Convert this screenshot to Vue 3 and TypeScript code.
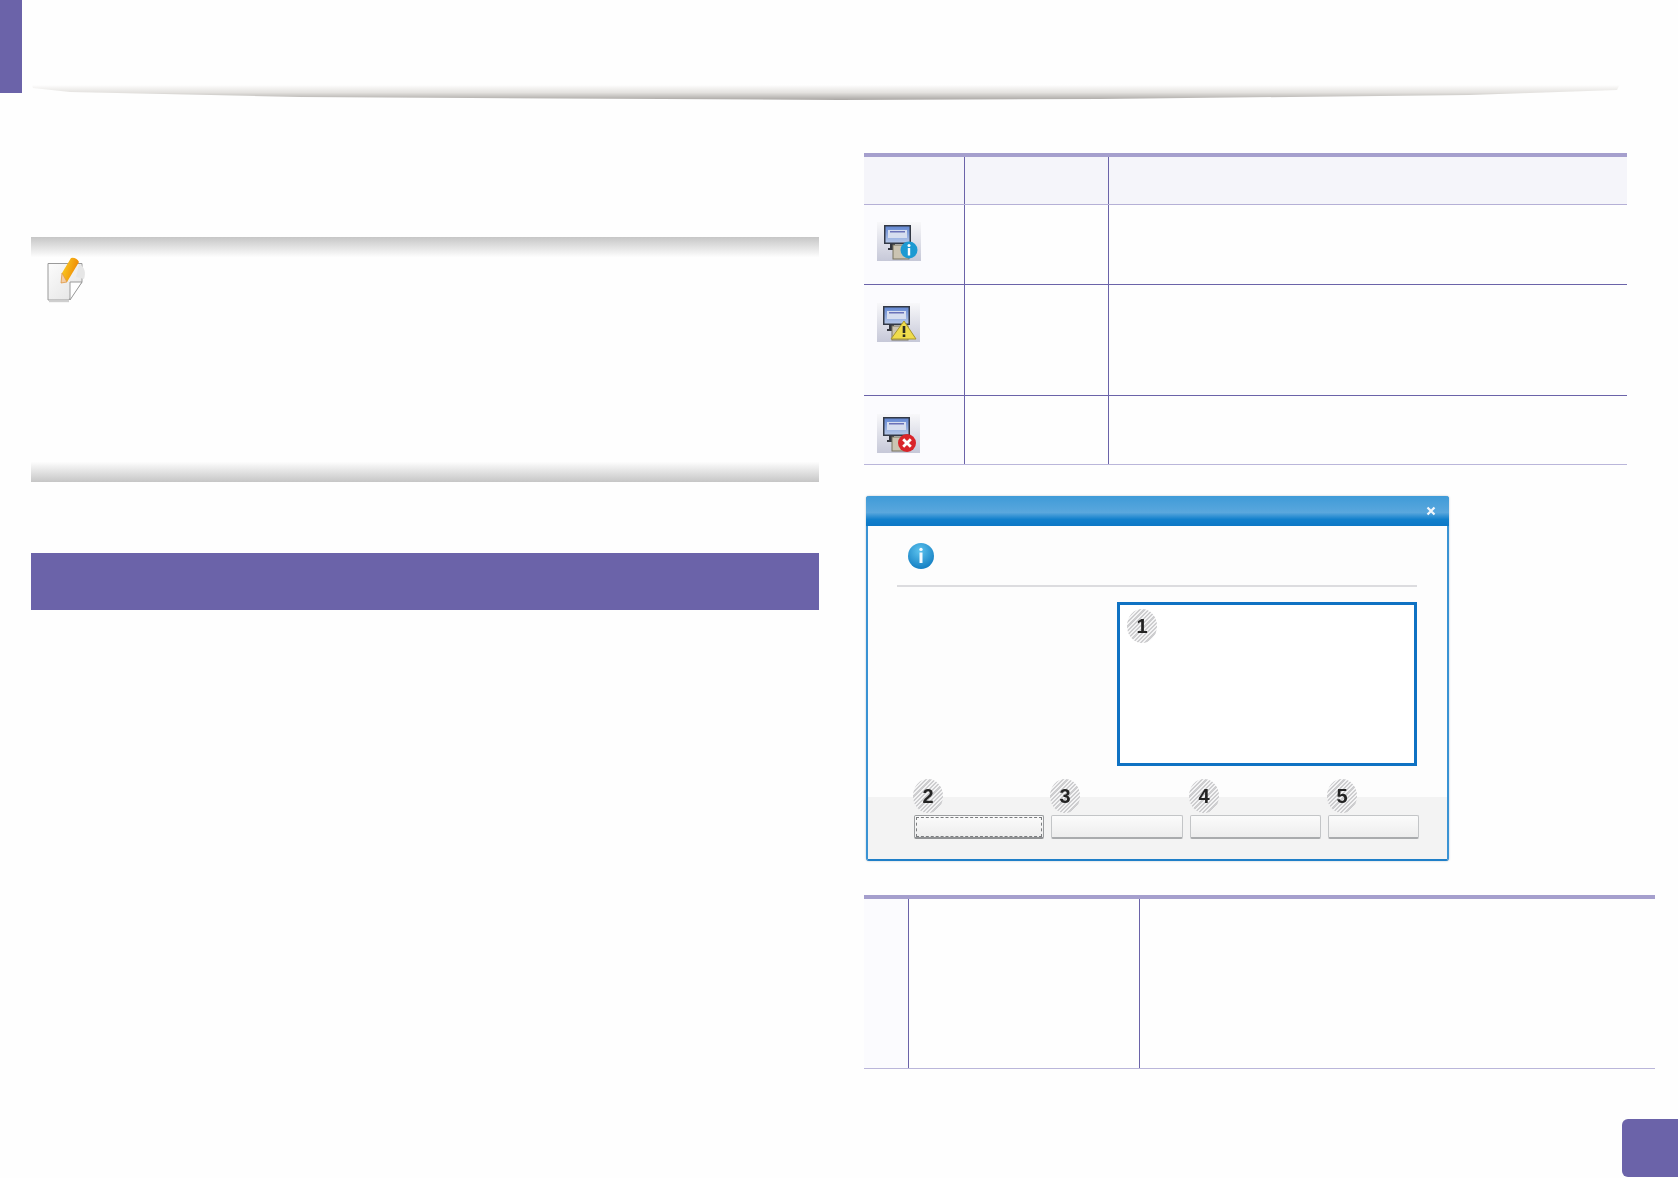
<script setup lang="ts">
// status rows in the first table, heights come from the reference
const statusRows = [
  { kind: 'info', height: 79, shift: 0 },
  { kind: 'warn', height: 110, shift: -1 },
  { kind: 'error', height: 68, shift: -1 },
]

const dialogButtons = [
  { label: '2', width: 130, focused: true },
  { label: '3', width: 132, focused: false },
  { label: '4', width: 131, focused: false },
  { label: '5', width: 91, focused: false },
]
</script>

<template>
  <div class="page">
    <header class="top">
      <div class="top-mark"></div>
      <svg class="top-shade" viewBox="0 0 1678 20" preserveAspectRatio="none">
        <defs>
          <linearGradient id="shade" gradientUnits="userSpaceOnUse" x1="0" y1="2" x2="0" y2="17">
            <stop offset="0" stop-color="#fefefe" />
            <stop offset="0.5" stop-color="#e4e2df" />
            <stop offset="1" stop-color="#a9a6a3" />
          </linearGradient>
          <filter id="soft"><feGaussianBlur stdDeviation="0.5" /></filter>
        </defs>
        <path d="M32 2 L1620 1 L1617 7 L1469 12 L1100 16 L840 17 L300 14 L70 9 L33 5 Z" fill="url(#shade)" filter="url(#soft)" />
      </svg>
    </header>

    <main class="columns">
      <section class="left">
        <div class="note">
          <div class="note-band note-band-top"></div>
          <div class="note-body">
            <svg class="note-icon" width="44" height="48" viewBox="0 0 44 48">
              <defs>
                <linearGradient id="paper" x1="0" y1="0" x2="1" y2="1">
                  <stop offset="0" stop-color="#fcfcfc" />
                  <stop offset="1" stop-color="#e2e2e2" />
                </linearGradient>
                <linearGradient id="pencil" x1="0" y1="0" x2="1" y2="0.35">
                  <stop offset="0" stop-color="#fbd324" />
                  <stop offset="1" stop-color="#ee8705" />
                </linearGradient>
              </defs>
              <path d="M2 8.5H36V27L23 45H2Z" fill="url(#paper)" stroke="#9a9a9a" stroke-width="1" />
              <path d="M36 27H24V45Z" fill="#fff" stroke="#9a9a9a" stroke-width="1" />
              <path d="M3 46.5H23" stroke="#cfcfcf" stroke-width="1.4" />
              <path d="M33 9C39 12 40 18 38 24L30 22Z" fill="#e6e6e6" />
              <path d="M16 18 L25 3 Q30 2 33 7 L21 27 Z" fill="url(#pencil)" />
              <path d="M16 18 L15 28 L21 27 Z" fill="#f3cda6" stroke="#dd8f30" stroke-width="0.7" />
            </svg>
          </div>
          <div class="note-band note-band-bottom"></div>
        </div>
        <div class="section-bar"></div>
      </section>

      <section class="right">
        <div class="status-table">
          <div class="row row-head">
            <div class="cell c-icon"></div>
            <div class="cell c-name"></div>
            <div class="cell c-text"></div>
          </div>
          <div
            v-for="row in statusRows"
            :key="row.kind"
            class="row"
            :style="{ height: row.height + 'px' }"
          >
            <div class="cell c-icon">
              <svg class="status-icon" :class="'icon-' + row.kind" width="44" height="39" viewBox="0 0 44 39">
                <defs>
                  <linearGradient :id="'bg-' + row.kind" x1="0" y1="0" x2="0" y2="1">
                    <stop offset="0" stop-color="#f8f8fa" />
                    <stop offset="1" stop-color="#c6c8d8" />
                  </linearGradient>
                  <linearGradient :id="'scr-' + row.kind" x1="0" y1="0" x2="0" y2="1">
                    <stop offset="0" stop-color="#6488d2" />
                    <stop offset="1" stop-color="#b4c6e8" />
                  </linearGradient>
                </defs>
                <rect :width="row.kind === 'info' ? 44 : 43" height="39" :fill="`url(#bg-${row.kind})`" />
                <g :transform="`translate(${row.shift} 0)`">
                  <rect x="7" y="3" width="27" height="19" fill="#333945" />
                  <rect x="8.5" y="4.5" width="24" height="16" :fill="`url(#scr-${row.kind})`" />
                  <rect x="11" y="8" width="19" height="8" fill="#d6deef" />
                  <rect x="13" y="9" width="15" height="1.5" fill="#6a72b8" />
                  <rect x="13" y="22" width="5" height="5" fill="#33363e" />
                  <rect x="11" y="26" width="9" height="2" fill="#33363e" />
                  <rect x="16" y="23" width="16" height="14" fill="#cbc4b2" stroke="#77725f" stroke-width="1" />
                  <template v-if="row.kind === 'info'">
                    <circle cx="32" cy="28" r="8.5" fill="#1d9ad2" />
                    <circle cx="32" cy="23.6" r="1.5" fill="#fff" />
                    <rect x="30.8" y="26" width="2.4" height="7.5" fill="#fff" />
                  </template>
                  <template v-else-if="row.kind === 'warn'">
                    <path d="M28 18 L40 36 H15 Z" fill="#efdc4c" stroke="#a8972c" stroke-width="1" />
                    <rect x="26.7" y="23" width="2.6" height="7" fill="#2b2b20" />
                    <rect x="26.7" y="31.4" width="2.6" height="2.6" fill="#2b2b20" />
                  </template>
                  <template v-else>
                    <circle cx="31" cy="29" r="9" fill="#d9242a" />
                    <path d="M27.2 25.2 L34.8 32.8 M34.8 25.2 L27.2 32.8" stroke="#fff" stroke-width="2.8" />
                  </template>
                </g>
              </svg>
            </div>
            <div class="cell c-name"></div>
            <div class="cell c-text"></div>
          </div>
        </div>

        <div class="dialog">
          <div class="dialog-title">
            <svg width="10" height="10" viewBox="0 0 10 10">
              <path d="M1.5 1.5 L8.5 8.5 M8.5 1.5 L1.5 8.5" stroke="#f1f6fb" stroke-width="2.2" />
            </svg>
          </div>
          <div class="dialog-main">
            <div class="dialog-head">
              <svg width="30" height="30" viewBox="0 0 30 30">
                <defs>
                  <radialGradient id="ball" cx="0.45" cy="0.3" r="0.8">
                    <stop offset="0" stop-color="#5cc3ee" />
                    <stop offset="1" stop-color="#0b76bd" />
                  </radialGradient>
                </defs>
                <circle cx="15" cy="15" r="13" fill="url(#ball)" />
                <circle cx="15" cy="8.4" r="1.7" fill="#f4fbff" />
                <rect x="13.5" y="11.5" width="3" height="10.5" fill="#f4fbff" />
              </svg>
            </div>
            <div class="dialog-rule"></div>
            <div class="dialog-box">
              <span class="badge badge-box">1</span>
            </div>
          </div>
          <div class="dialog-foot">
            <div
              v-for="btn in dialogButtons"
              :key="btn.label"
              class="dialog-btn"
              :class="{ focused: btn.focused }"
              :style="{ width: btn.width + 'px' }"
            >
              <span class="badge badge-btn">{{ btn.label }}</span>
            </div>
          </div>
        </div>

        <div class="detail-table">
          <div class="detail-cell d-num"></div>
          <div class="detail-cell d-name"></div>
          <div class="detail-cell d-text"></div>
        </div>
      </section>
    </main>

    <footer class="bottom">
      <div class="page-tab"></div>
    </footer>
  </div>
</template>

<style scoped>
.page {
  width: 1678px;
  height: 1178px;
  background: #fefefe;
  display: flex;
  flex-direction: column;
  font-family: 'Liberation Sans', Arial, sans-serif;
  overflow: hidden;
}

.top {
  height: 93px;
  flex: none;
  position: relative;
}

.top-mark {
  width: 22px;
  height: 93px;
  background: #6b63a9;
}

.top-shade {
  position: absolute;
  left: 0;
  top: 83px;
  width: 1678px;
  height: 20px;
}

.columns {
  flex: 1;
  display: flex;
  min-height: 0;
}

.left {
  width: 788px;
  margin-left: 31px;
  padding-top: 144px;
}

.note-band {
  height: 20px;
}

.note-band-top {
  background: linear-gradient(#c6c6c6, #fdfdfd);
}

.note-band-bottom {
  background: linear-gradient(#fdfdfd, #c6c6c6);
}

.note-body {
  display: flow-root;
  height: 205px;
  padding-left: 15px;
}

.note-icon {
  display: block;
  margin-top: -2px;
  overflow: visible;
}

.section-bar {
  height: 57px;
  margin-top: 71px;
  background: #6b63a9;
}

.right {
  width: 791px;
  margin-left: 45px;
  padding-top: 60px;
}

.status-table {
  width: 763px;
  border-top: 4px solid #a59fcd;
  border-bottom: 1px solid #bab6da;
}

.row {
  display: flex;
  border-bottom: 1px solid #6b63a9;
}

.row:last-child {
  border-bottom: none;
}

.row-head {
  height: 47px;
  background: #f5f5fa;
  border-bottom-color: #b5b0d6;
}

.cell {
  box-sizing: border-box;
  flex: none;
}

.c-icon {
  width: 101px;
  padding: 18px 0 0 13px;
  background: #fbfbfe;
  border-right: 1px solid #6b63a9;
}

.c-name {
  width: 144px;
  border-right: 1px solid #6b63a9;
}

.c-text {
  flex: 1;
}

.row-head .c-icon {
  background: transparent;
}

.status-icon {
  display: block;
  filter: blur(0.6px);
}

.icon-info {
  margin-top: -1px;
}

.dialog {
  width: 583px;
  height: 365px;
  margin: 31px 0 0 2px;
  box-sizing: border-box;
  border: 2px solid #3a93d4;
  border-top: none;
  border-bottom-color: #1f7fc8;
  border-radius: 3px;
  background: #fdfdfd;
  display: flex;
  flex-direction: column;
  box-shadow: 0 0 2px rgba(90, 110, 130, 0.45);
}

.dialog-title {
  height: 30px;
  flex: none;
  margin: 0 -2px;
  border-radius: 3px 3px 0 0;
  background: linear-gradient(#3f9bd8, #5aa7dd 55%, #1280cc 78%, #0d78c6);
  display: flex;
  align-items: center;
  justify-content: flex-end;
  padding-right: 13px;
  filter: blur(0.4px);
}

.dialog-main {
  flex: 1;
  padding: 0 30px 0 29px;
}

.dialog-head {
  height: 59px;
  padding: 15px 0 0 9px;
  box-sizing: border-box;
}

.dialog-rule {
  height: 2px;
  background: #dcdcdf;
}

.dialog-box {
  position: relative;
  box-sizing: border-box;
  width: 300px;
  height: 164px;
  margin: 15px 0 0 auto;
  border: 3px solid #0f72c3;
  background: #fff;
  filter: blur(0.3px);
}

.dialog-foot {
  height: 62px;
  flex: none;
  background: #f3f3f3;
  display: flex;
  gap: 7px;
  padding: 18px 0 0 46px;
  box-sizing: border-box;
}

.dialog-btn {
  position: relative;
  height: 24px;
  box-sizing: border-box;
  border: 1px solid #c3c5c7;
  border-bottom: 2px solid #a9abad;
  border-radius: 2px;
  background: linear-gradient(#fbfbfb, #ededed);
}

.dialog-btn.focused {
  border: 1px solid #9a9c9e;
  border-bottom: 2px solid #8f9193;
  outline: 1px dashed #7b7d7f;
  outline-offset: -3px;
}

.badge {
  position: absolute;
  width: 30px;
  height: 34px;
  border-radius: 50%;
  display: flex;
  align-items: center;
  justify-content: center;
  font-size: 20px;
  font-weight: 700;
  color: #242424;
  background: repeating-linear-gradient(135deg, #cdcdcf 0 1.5px, #f4f4f5 1.5px 3px);
  filter: blur(0.5px);
}

.badge-box {
  left: 7px;
  top: 4px;
}

.badge-btn {
  left: -2px;
  top: -37px;
}

.detail-table {
  height: 174px;
  margin-top: 34px;
  box-sizing: border-box;
  border-top: 4px solid #a59fcd;
  border-bottom: 1px solid #bab6da;
  display: flex;
}

.detail-cell {
  box-sizing: border-box;
  flex: none;
}

.d-num {
  width: 45px;
  background: #fbfbfe;
  border-right: 1px solid #6b63a9;
}

.d-name {
  width: 231px;
  border-right: 1px solid #6b63a9;
}

.d-text {
  flex: 1;
}

.bottom {
  height: 59px;
  flex: none;
  display: flex;
  justify-content: flex-end;
}

.page-tab {
  width: 56px;
  height: 58px;
  background: #6b63a9;
  border-radius: 6px 0 0 6px;
}
</style>
